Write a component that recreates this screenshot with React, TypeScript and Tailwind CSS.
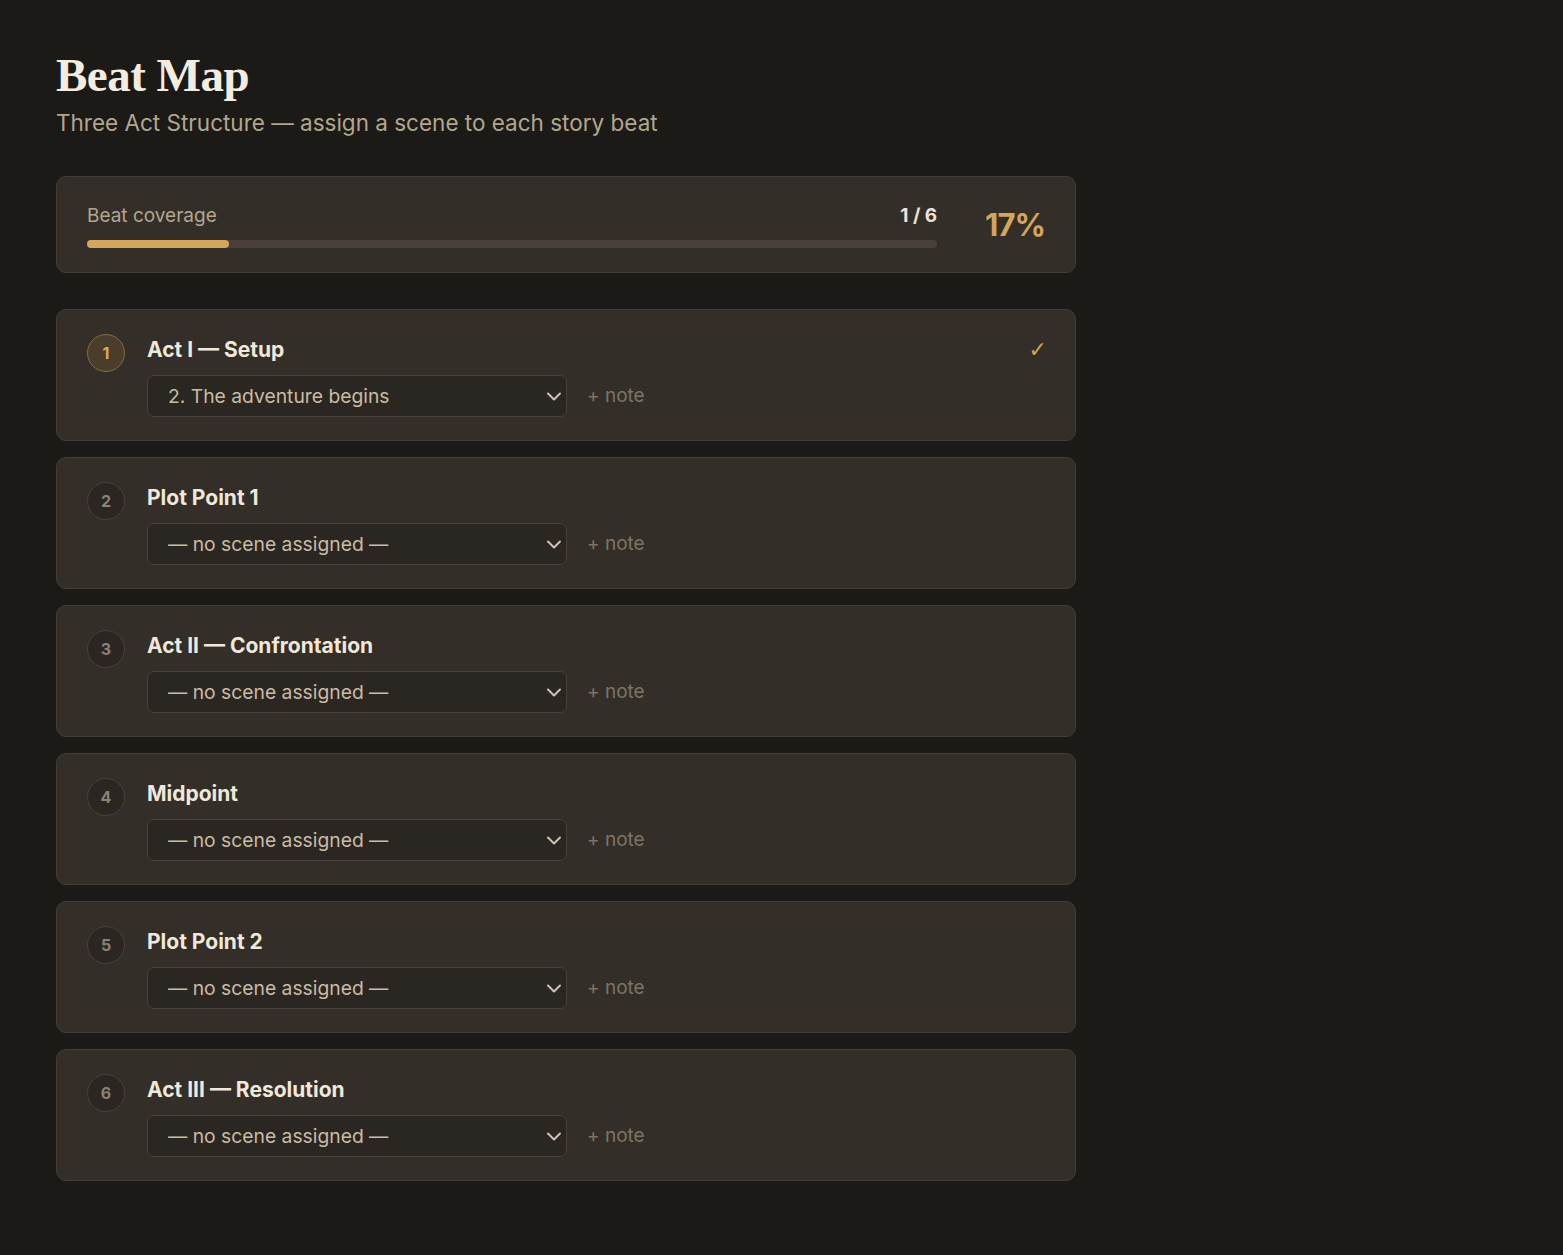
import React from "react";

interface Beat {
  id: number;
  title: string;
  scene: string | null;
}

const beats: Beat[] = [
  { id: 1, title: "Act I — Setup", scene: "2. The adventure begins" },
  { id: 2, title: "Plot Point 1", scene: null },
  { id: 3, title: "Act II — Confrontation", scene: null },
  { id: 4, title: "Midpoint", scene: null },
  { id: 5, title: "Plot Point 2", scene: null },
  { id: 6, title: "Act III — Resolution", scene: null },
];

function BeatCard({ beat }: { beat: Beat }) {
  const done = beat.scene !== null;

  return (
    <section className="flex items-start gap-[22px] rounded-[10px] border border-[#433d36] bg-[#332e28] px-[30px] pt-6 pb-[23px]">
      <div
        className={`flex h-[38px] w-[38px] shrink-0 items-center justify-center rounded-full border text-[16px] font-bold ${
          done
            ? "border-[#8a6b3f] bg-[#4a3d2c] text-[#dcaa5e]"
            : "border-[#48413a] bg-[#2a2622] text-[#8c8273]"
        }`}
      >
        {beat.id}
      </div>
      <div className="flex-1">
        <div className="flex items-center justify-between">
          <h3 className="pt-[2px] text-[21px] font-bold leading-[28px] text-[#f0e8da]">
            {beat.title}
          </h3>
          {done ? (
            <span className="-mr-[2px] pt-[2px] font-['DejaVu_Sans',sans-serif] text-[22px] leading-[28px] text-[#d4a55a]">
              ✓
            </span>
          ) : null}
        </div>
        <div className="mt-[11px] flex items-center">
          <div className="relative w-[420px]">
            <select
              defaultValue={beat.scene ?? ""}
              className="h-[42px] w-full appearance-none rounded-[7px] border border-[#48413a] bg-[#2a2622] pl-5 pr-10 text-[19.3px] text-[#cabca2] outline-none"
            >
              <option value="">— no scene assigned —</option>
              <option value="1. Ordinary world">1. Ordinary world</option>
              <option value="2. The adventure begins">2. The adventure begins</option>
            </select>
            <svg
              className="pointer-events-none absolute right-[5px] top-[17px]"
              width="16"
              height="9"
              viewBox="0 0 16 9"
              fill="none"
            >
              <polyline
                points="2,1.5 8,7.5 14,1.5"
                stroke="#d2c4aa"
                strokeWidth="2"
                strokeLinecap="round"
                strokeLinejoin="round"
              />
            </svg>
          </div>
          <button className="ml-5 text-[19px] text-[#7d7465]">+ note</button>
        </div>
      </div>
    </section>
  );
}

export default function App() {
  const assigned = beats.filter((b) => b.scene !== null).length;
  const pct = Math.round((assigned / beats.length) * 100);

  return (
    <main className="min-h-screen bg-[#1c1a17] px-14 pt-[52px] pb-20 font-['Inter',sans-serif]">
      <h1 className="font-['Liberation_Serif','DejaVu_Serif',serif] text-[47px] font-bold leading-none tracking-[-0.5px] text-[#f3ece0]">
        Beat Map
      </h1>
      <p className="mt-[9px] text-[22.5px] leading-[30px] text-[#b3a68e]">
        Three Act Structure — assign a scene to each story beat
      </p>

      <section className="mt-[38px] flex w-[1020px] items-center rounded-[10px] border border-[#433d36] bg-[#332e28] px-[30px] pt-6 pb-6">
        <div className="flex-1">
          <div className="flex items-center justify-between">
            <span className="pt-[2px] text-[19px] leading-[26px] text-[#b3a68e]">
              Beat coverage
            </span>
            <span className="pt-[2px] text-[19px] font-bold leading-[26px] text-[#ece4d6]">
              {assigned} / {beats.length}
            </span>
          </div>
          <div className="mt-[11px] h-2 w-full rounded-full bg-[#4a403b]">
            <div
              className="h-2 rounded-full bg-[#d4a55a]"
              style={{ width: `${(assigned / beats.length) * 100}%` }}
            />
          </div>
        </div>
        <span className="ml-12 text-[31px] font-bold leading-none tracking-[-1px] text-[#d4a55a]">
          {pct}%
        </span>
      </section>

      <section className="mt-[36px] flex w-[1020px] flex-col gap-4">
        {beats.map((beat) => (
          <BeatCard key={beat.id} beat={beat} />
        ))}
      </section>
    </main>
  );
}
